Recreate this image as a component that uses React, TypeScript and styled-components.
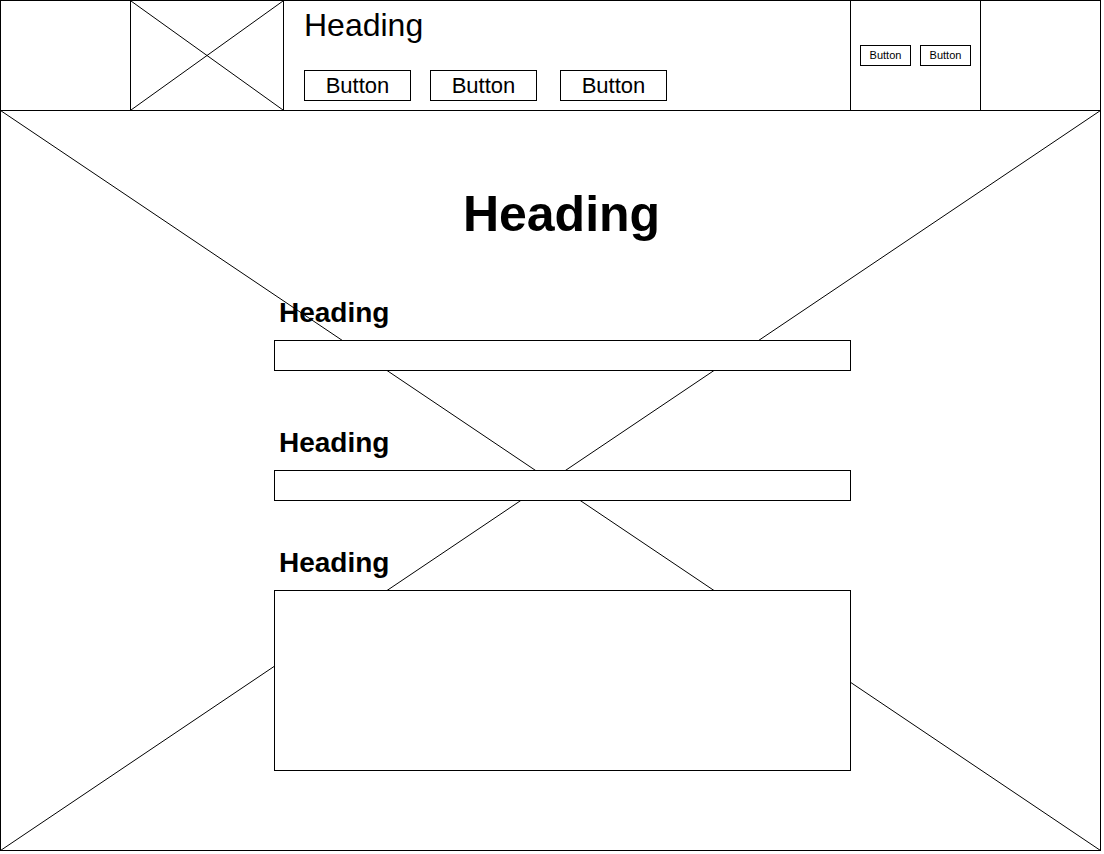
import React from "react";
import styled, { createGlobalStyle } from "styled-components";

const Global = createGlobalStyle`
  html, body { margin: 0; padding: 0; background: #fff; }
  body { font-family: "Liberation Sans", Arial, Helvetica, sans-serif; color: #000; }
  * { box-sizing: border-box; }
`;

const Page = styled.div`
  width: 1101px;
  display: flex;
  flex-direction: column;
`;

const Header = styled.header`
  height: 111px;
  border: 1px solid #000;
  display: grid;
  grid-template-columns: 129px 154px 567px 130px 119px;
`;

const EmptyCell = styled.div``;

const ImageCell = styled.div`
  position: relative;
  border-left: 1px solid #000;
  border-right: 1px solid #000;
`;

const CrossSvg = styled.svg`
  position: absolute;
  inset: 0;
  width: 100%;
  height: 100%;
  display: block;
`;

const TitleCell = styled.div`
  border-right: 1px solid #000;
  padding: 8px 0 0 20px;
  display: flex;
  flex-direction: column;
`;

const SiteTitle = styled.h1`
  margin: 0;
  font-size: 32px;
  line-height: 32px;
  font-weight: 400;
`;

const NavRow = styled.nav`
  display: flex;
  margin-top: 29px;
`;

const NavButton = styled.button<{ $offset: number }>`
  width: 107px;
  height: 31px;
  margin-left: ${(p) => p.$offset}px;
  border: 1px solid #000;
  background: #fff;
  padding: 0;
  font-family: inherit;
  font-size: 22px;
  line-height: 29px;
  color: #000;
`;

const ActionsCell = styled.div`
  border-right: 1px solid #000;
  display: flex;
  align-items: center;
  justify-content: center;
  gap: 9px;
`;

const SmallButton = styled.button`
  width: 51px;
  height: 21px;
  border: 1px solid #000;
  background: #fff;
  padding: 0;
  font-family: inherit;
  font-size: 11px;
  line-height: 19px;
  color: #000;
`;

const Main = styled.main`
  position: relative;
  margin-top: -1px;
  height: 741px;
  border: 1px solid #000;
  padding: 78px 0 0 273px;
`;

const BackdropSvg = styled.svg`
  position: absolute;
  top: -1px;
  left: -1px;
  width: 1101px;
  height: 741px;
  display: block;
`;

const Form = styled.form`
  position: relative;
  width: 577px;
  display: flex;
  flex-direction: column;
`;

const PageTitle = styled.h2`
  margin: 0;
  padding-right: 2px;
  text-align: center;
  font-size: 50px;
  line-height: 50px;
  font-weight: 700;
`;

const Field = styled.div<{ $top: number }>`
  display: flex;
  flex-direction: column;
  margin-top: ${(p) => p.$top}px;
`;

const Label = styled.label`
  margin: 0 0 13px 5px;
  font-size: 28px;
  line-height: 28px;
  font-weight: 700;
`;

const TextInput = styled.input`
  width: 577px;
  height: 31px;
  border: 1px solid #000;
  border-radius: 0;
  background: #fff;
  padding: 0 6px;
  outline: none;
`;

const TextArea = styled.textarea`
  width: 577px;
  height: 181px;
  border: 1px solid #000;
  border-radius: 0;
  background: #fff;
  resize: none;
  outline: none;
  padding: 6px;
  display: block;
`;

export default function App() {
  return (
    <>
      <Global />
      <Page>
        <Header>
          <EmptyCell />
          <ImageCell>
            <CrossSvg preserveAspectRatio="none" viewBox="0 0 100 100">
              <line x1="0" y1="0" x2="100" y2="100" stroke="#000" strokeWidth="1" vectorEffect="non-scaling-stroke" />
              <line x1="100" y1="0" x2="0" y2="100" stroke="#000" strokeWidth="1" vectorEffect="non-scaling-stroke" />
            </CrossSvg>
          </ImageCell>
          <TitleCell>
            <SiteTitle>Heading</SiteTitle>
            <NavRow>
              <NavButton type="button" $offset={0}>Button</NavButton>
              <NavButton type="button" $offset={19}>Button</NavButton>
              <NavButton type="button" $offset={23}>Button</NavButton>
            </NavRow>
          </TitleCell>
          <ActionsCell>
            <SmallButton type="button">Button</SmallButton>
            <SmallButton type="button">Button</SmallButton>
          </ActionsCell>
          <EmptyCell />
        </Header>
        <Main>
          <BackdropSvg viewBox="0 0 1101 741">
            <line x1="0.5" y1="0.5" x2="1100.5" y2="740.5" stroke="#000" strokeWidth="1" />
            <line x1="1100.5" y1="0.5" x2="0.5" y2="740.5" stroke="#000" strokeWidth="1" />
          </BackdropSvg>
          <Form onSubmit={(e) => e.preventDefault()}>
            <PageTitle>Heading</PageTitle>
            <Field $top={60}>
              <Label>Heading</Label>
              <TextInput />
            </Field>
            <Field $top={58}>
              <Label>Heading</Label>
              <TextInput />
            </Field>
            <Field $top={48}>
              <Label>Heading</Label>
              <TextArea />
            </Field>
          </Form>
        </Main>
      </Page>
    </>
  );
}
